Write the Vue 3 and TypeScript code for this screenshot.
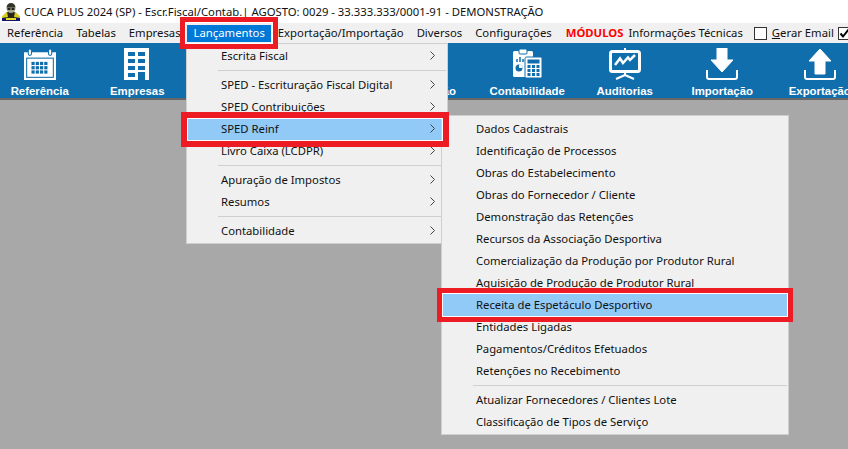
<script setup lang="ts">
interface Row { label?: string; arrow?: boolean; active?: boolean; sep?: boolean }

const menuBar = ['Referência', 'Tabelas', 'Empresas', 'Lançamentos', 'Exportação/Importação', 'Diversos', 'Configurações']

const mainRows: Row[] = [
  { label: 'Escrita Fiscal', arrow: true },
  { sep: true },
  { label: 'SPED - Escrituração Fiscal Digital', arrow: true },
  { label: 'SPED Contribuições', arrow: true },
  { label: 'SPED Reinf', arrow: true, active: true },
  { label: 'Livro Caixa (LCDPR)', arrow: true },
  { sep: true },
  { label: 'Apuração de Impostos', arrow: true },
  { label: 'Resumos', arrow: true },
  { sep: true },
  { label: 'Contabilidade', arrow: true },
]

const subRows: Row[] = [
  { label: 'Dados Cadastrais' },
  { label: 'Identificação de Processos' },
  { label: 'Obras do Estabelecimento' },
  { label: 'Obras do Fornecedor / Cliente' },
  { label: 'Demonstração das Retenções' },
  { label: 'Recursos da Associação Desportiva' },
  { label: 'Comercialização da Produção por Produtor Rural' },
  { label: 'Aquisição de Produção de Produtor Rural' },
  { label: 'Receita de Espetáculo Desportivo', active: true },
  { label: 'Entidades Ligadas' },
  { label: 'Pagamentos/Créditos Efetuados' },
  { label: 'Retenções no Recebimento' },
  { sep: true },
  { label: 'Atualizar Fornecedores / Clientes Lote' },
  { label: 'Classificação de Tipos de Serviço' },
]
</script>

<template>
  <div class="app">
    <header class="title">
      <svg class="logo" viewBox="0 0 18 18" width="18" height="18">
        <rect x="0" y="14" width="18" height="4" fill="#14146e" />
        <rect x="4" y="15" width="10" height="2" fill="#e8e020" />
        <path d="M2 15 Q3 9 6 9 L12 9 Q15 9 16 15 Z" fill="#26261c" />
        <path d="M0 13 L5 9 L6 14 L0 15 Z" fill="#d8d020" />
        <path d="M18 13 L13 9 L12 14 L18 15 Z" fill="#d8d020" />
        <circle cx="9" cy="5.500" r="4.500" fill="#a8a890" />
        <path d="M4.500 4.500 Q5 0 9 0 Q13 0 13.500 4.500 Z" fill="#33332a" />
        <rect x="5.500" y="5" width="3" height="2" fill="#222" />
        <rect x="9.500" y="5" width="3" height="2" fill="#222" />
      </svg>
      <span>CUCA PLUS 2024 (SP) - Escr.Fiscal/Contab.| AGOSTO: 0029 - 33.333.333/0001-91 - DEMONSTRAÇÃO</span>
    </header>

    <nav class="menubar">
      <span v-for="m in menuBar" :key="m" class="mb-item" :class="{ current: m === 'Lançamentos' }">{{ m }}</span>
      <span class="mb-item modules">MÓDULOS</span>
      <span class="mb-info">Informações Técnicas</span>
      <span class="box"></span>
      <span class="mb-email"><u>G</u>erar Email</span>
      <span class="box checked">
        <svg viewBox="0 0 11 11" width="11" height="11"><path d="M1.500 5.500 L4 8.500 L9.500 1.500" fill="none" stroke="#000" stroke-width="2" /></svg>
      </span>
    </nav>

    <section class="toolbar">
      <div class="tool">
        <svg class="ico" viewBox="0 0 30 30">
          <path d="M0 4 H30 V30 H0 Z" fill="#fff" />
          <rect x="4" y="1" width="3" height="6" rx="1.500" fill="#fff" stroke="#106ead" />
          <rect x="23" y="1" width="3" height="6" rx="1.500" fill="#fff" stroke="#106ead" />
          <rect x="2" y="9" width="26" height="19" fill="#106ead" />
          <rect x="3" y="10" width="24" height="17" fill="#fff" />
          <g fill="#106ead">
            <rect x="7" y="13" width="3" height="3" /><rect x="11" y="13" width="3" height="3" /><rect x="15" y="13" width="3" height="3" /><rect x="19" y="13" width="3" height="3" />
            <rect x="7" y="17" width="3" height="3" /><rect x="11" y="17" width="3" height="3" /><rect x="15" y="17" width="3" height="3" /><rect x="19" y="17" width="3" height="3" />
            <rect x="7" y="21" width="3" height="3" /><rect x="11" y="21" width="3" height="3" /><rect x="15" y="21" width="3" height="3" /><rect x="19" y="21" width="3" height="3" />
          </g>
        </svg>
        <span>Referência</span>
      </div>
      <div class="tool">
        <svg class="ico" viewBox="0 0 30 32">
          <path d="M2 0 H27 V32 H2 Z" fill="#fff" />
          <g fill="#106ead">
            <rect x="6" y="4" width="7" height="4" /><rect x="16" y="4" width="7" height="4" />
            <rect x="6" y="11" width="7" height="4" /><rect x="16" y="11" width="7" height="4" />
            <rect x="6" y="18" width="7" height="4" /><rect x="16" y="18" width="7" height="4" />
            <rect x="6" y="25" width="7" height="4" /><rect x="16" y="24" width="7" height="8" />
          </g>
        </svg>
        <span>Empresas</span>
      </div>
      <div class="tool"></div>
      <div class="tool"></div>
      <div class="tool"><span class="ico"></span><span>Apuração</span></div>
      <div class="tool">
        <svg class="ico" viewBox="0 0 30 32">
          <rect x="1" y="3" width="20" height="26" rx="1.500" fill="#fff" />
          <rect x="7" y="1" width="8" height="5" rx="1" fill="#fff" stroke="#106ead" />
          <path d="M5 14 V11 M8 14 V9 M11 14 V11 M14 14 V12" stroke="#106ead" stroke-width="1.500" />
          <circle cx="7" cy="20" r="3.500" fill="#106ead" />
          <path d="M7 20 V16.500 A3.500 3.500 0 0 1 10.500 20 Z" fill="#fff" />
          <rect x="13" y="9" width="17" height="21" rx="1.500" fill="#fff" stroke="#106ead" />
          <rect x="15.500" y="11.500" width="12" height="4" fill="#106ead" />
          <g fill="#106ead">
            <rect x="15.500" y="17" width="3" height="3" /><rect x="20" y="17" width="3" height="3" /><rect x="24.500" y="17" width="3" height="3" />
            <rect x="15.500" y="21" width="3" height="3" /><rect x="20" y="21" width="3" height="3" /><rect x="24.500" y="21" width="3" height="3" />
            <rect x="15.500" y="25" width="3" height="3" /><rect x="20" y="25" width="3" height="3" /><rect x="24.500" y="25" width="3" height="3" />
          </g>
        </svg>
        <span>Contabilidade</span>
      </div>
      <div class="tool">
        <svg class="ico" viewBox="0 0 32 32">
          <rect x="15" y="0" width="2" height="4" fill="#fff" />
          <rect x="1.500" y="3.500" width="29" height="20" rx="2" fill="none" stroke="#fff" stroke-width="3" />
          <path d="M6 17 L11 10.500 L14 15 L19 9.500 L21 12 L26 7" fill="none" stroke="#fff" stroke-width="2.500" />
          <path d="M16 24 V28 M16 27 L7 31 M16 27 L25 31" stroke="#fff" stroke-width="2" />
        </svg>
        <span>Auditorias</span>
      </div>
      <div class="tool">
        <svg class="ico" viewBox="0 0 32 32">
          <path d="M11 0 H21 V12 H27 L16 24 L5 12 H11 Z" fill="#fff" stroke="#fff" stroke-linejoin="round" />
          <path d="M1 22 V29 Q1 31 3 31 H29 Q31 31 31 29 V22" fill="none" stroke="#fff" stroke-width="2" />
        </svg>
        <span>Importação</span>
      </div>
      <div class="tool">
        <svg class="ico" viewBox="0 0 32 32">
          <path d="M16 1 L27 13 H21 V26 H11 V13 H5 Z" fill="#fff" stroke="#fff" stroke-linejoin="round" />
          <path d="M1 22 V29 Q1 31 3 31 H29 Q31 31 31 29 V22" fill="none" stroke="#fff" stroke-width="2" />
        </svg>
        <span>Exportação</span>
      </div>
    </section>

    <main class="desk"></main>

    <div class="menu main-menu">
      <template v-for="(r, i) in mainRows" :key="i">
        <div v-if="r.sep" class="sep"></div>
        <div v-else class="row" :class="{ active: r.active }">
          <span>{{ r.label }}</span>
          <svg v-if="r.arrow" class="chev" viewBox="0 0 5 9" width="5" height="9"><path d="M0.500 0.500 L4.500 4.500 L0.500 8.500" fill="none" stroke="#444" /></svg>
        </div>
      </template>
    </div>

    <div class="menu sub-menu">
      <template v-for="(r, i) in subRows" :key="i">
        <div v-if="r.sep" class="sep"></div>
        <div v-else class="row" :class="{ active: r.active }"><span>{{ r.label }}</span></div>
      </template>
    </div>

    <div class="mark mark-top"></div>
    <div class="mark mark-reinf"></div>
    <div class="mark mark-receita"></div>
  </div>
</template>

<style>
html, body { margin: 0; padding: 0; background: #a8a8a8; overflow: hidden; }
</style>

<style scoped>
.app {
  position: relative;
  width: 848px;
  height: 449px;
  overflow: hidden;
  display: flex;
  flex-direction: column;
  font-family: "Noto Sans", "Open Sans", sans-serif;
  font-size: 11.3px;
  color: #111;
  background: #a8a8a8;
}
.title {
  height: 23px;
  background: #fff;
  display: flex;
  align-items: center;
  gap: 4px;
  padding-left: 2px;
  white-space: nowrap;
}
.logo { flex: none; }
.menubar {
  height: 20px;
  background: #f0f0f0;
  display: flex;
  align-items: center;
  white-space: nowrap;
  padding-left: 0.5px;
}
.mb-item {
  padding: 0 6.5px;
  height: 17px;
  line-height: 15px;
  box-sizing: border-box;
}
.mb-item.current { background: #0078d7; color: #fff; }
.modules { color: #f00; font-weight: 700; margin-left: 1px; }
.mb-info { margin-left: -1.5px; margin-top: -2px; }
.box {
  flex: none;
  width: 11px;
  height: 11px;
  background: #fff;
  border: 1px solid #333;
  margin-left: 11px;
  display: flex;
}
.box.checked { margin-left: 4px; }
.mb-email { margin-left: 5px; margin-top: -2px; }
.toolbar {
  height: 55px;
  background: #106ead;
  border-bottom: 2px solid #666;
  display: grid;
  grid-template-columns: repeat(9, 97.5px);
  margin-right: -100px;
}
.tool {
  display: flex;
  flex-direction: column;
  align-items: center;
  padding-top: 5px;
  color: #fff;
  font: 700 11.4px "Liberation Sans", Arial, sans-serif;
  white-space: nowrap;
  transform: translateX(-9px);
}
.ico { width: 32px; height: 32px; margin-bottom: 5px; display: block; }
.desk { flex: 1; }
.menu {
  position: absolute;
  background: #f0f0f0;
  border: 1px solid #cfcfcf;
  box-sizing: border-box;
  padding: 2px 1px;
}
.main-menu { left: 186px; top: 43px; width: 262px; height: 201px; padding-top: 1px; }
.sub-menu { left: 441px; top: 115px; width: 348px; height: 320px; }
.row {
  height: 22px;
  box-sizing: border-box;
  padding: 0 0 2px 33px;
  display: flex;
  align-items: center;
  justify-content: space-between;
  white-space: nowrap;
  position: relative;
}
.row.active { background: #91c9f7; }
.chev { position: absolute; right: 11px; top: 6px; }
.sep { height: 1px; margin: 3px 0 3px 30px; background: #d0d0d0; }
.mark {
  position: absolute;
  box-sizing: border-box;
  border-style: solid;
  border-color: #ed1c24;
  box-shadow: inset 0 0 0 1px #fff;
}
.mark-top { left: 180px; top: 17px; width: 98px; height: 32px; border-width: 5px; }
.mark-reinf { left: 181px; top: 112px; width: 268px; height: 35px; border-width: 6px; }
.mark-receita { left: 437px; top: 288px; width: 356px; height: 34px; border-width: 5px; }
</style>
